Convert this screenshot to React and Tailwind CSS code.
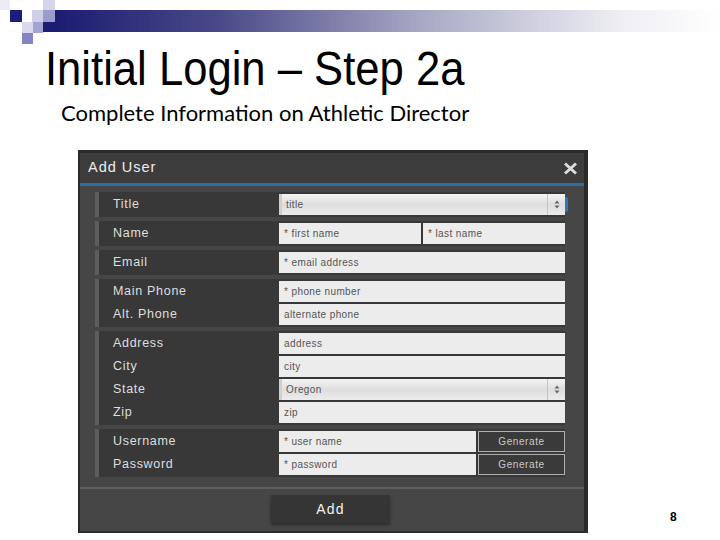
import React from "react";

function Input({ text, w = "w-[286px]" }) {
  return (
    <div className={`${w} h-[21px] bg-[#ececec] flex items-center pl-[5px] text-[10px] tracking-[0.4px] text-[#555] whitespace-nowrap`}>
      {text}
    </div>
  );
}

function Arrows() {
  return (
    <svg width="6" height="9" viewBox="0 0 6 9">
      <path d="M3 0.5 L5.5 3.5 H0.5 Z" fill="#666" />
      <path d="M3 8.5 L5.5 5.5 H0.5 Z" fill="#666" />
    </svg>
  );
}

function Select({ text, focus }) {
  return (
    <div className="relative w-[286px] h-[21px] flex bg-linear-to-b from-[#f4f4f4] via-[#dedede] to-[#ececec] border-l-[3px] border-[#d0d0d0]">
      <div className="flex-1 flex items-center pl-[4px] text-[10px] tracking-[0.4px] text-[#555]">{text}</div>
      <div className="w-[18px] border-l border-[#c4c4c4] flex items-center justify-center">
        <Arrows />
      </div>
      {focus && <div className="absolute right-[-3px] top-[3px] w-[3px] h-[15px] bg-[#2f78c0] rounded-r-[2px]" />}
    </div>
  );
}

function GenButton() {
  return (
    <div className="w-[87px] h-[21px] bg-[#3a3a3a] border border-[#b0b0b0] flex items-center justify-center text-[10px] tracking-[0.6px] text-[#c8c8c8]">
      Generate
    </div>
  );
}

function Group({ labels, children }) {
  return (
    <div className="flex w-[470px] bg-[#383838]">
      <div className="w-[4px] bg-[#5d5d5d]" />
      <div className="w-[180px] flex flex-col gap-[2px] py-[2px]">
        {labels.map((l) => (
          <div key={l} className="h-[21px] flex items-center pl-[14px] text-[12.5px] tracking-[0.7px] text-[#dedede]">
            {l}
          </div>
        ))}
      </div>
      <div className="w-[286px] flex flex-col gap-[2px] py-[2px]">{children}</div>
    </div>
  );
}

export default function App() {
  return (
    <div className="w-[720px] h-[540px] bg-white flex flex-col overflow-hidden font-['Liberation_Sans',Arial,sans-serif]">
      <svg width="720" height="44" viewBox="0 0 720 44" className="block shrink-0">
        <defs>
          <linearGradient id="bar" x1="0" y1="0" x2="1" y2="0">
            <stop offset="0" stopColor="#1c1c72" />
            <stop offset="0.25" stopColor="#4a4a88" />
            <stop offset="0.55" stopColor="#a8a8c4" />
            <stop offset="0.85" stopColor="#eeeef4" />
            <stop offset="1" stopColor="#ffffff" />
          </linearGradient>
        </defs>
        <rect x="55" y="10" width="665" height="22" fill="url(#bar)" />
        <rect x="43" y="22" width="13" height="10" fill="#1c1c72" />
        <rect x="0" y="0" width="10" height="10" fill="#ececf6" />
        <rect x="10" y="10" width="12" height="12" fill="#1c1c7a" />
        <rect x="32" y="10" width="11" height="12" fill="#cfcfe8" />
        <rect x="43" y="0" width="12" height="10" fill="#d4d4ea" />
        <rect x="43" y="10" width="12" height="12" fill="#9c9ccc" />
        <rect x="22" y="22" width="11" height="11" fill="#d8d8ee" />
        <rect x="33" y="22" width="10" height="11" fill="#a4a4d2" />
        <rect x="22" y="33" width="11" height="11" fill="#8484c2" />
      </svg>

      <div className="h-[49px] leading-[49px] text-[49px] text-black pl-[45px] whitespace-nowrap">
        <span className="inline-block origin-left scale-x-[0.89]">Initial Login – Step 2a</span>
      </div>

      <div className="mt-[7px] h-[26px] leading-[26px] text-[22px] text-black pl-[61px] font-['Lato',sans-serif] whitespace-nowrap">
        Complete Information on Athletic Director
      </div>

      <div className="mt-[24px] flex items-end">
        <div className="ml-[78px] w-[510px] h-[383px] flex flex-col border-t-[3px] border-l-2 border-r-4 border-b-2 border-[#2a2a2a]">
          <div className="h-[30px] bg-[#3c3c3c] flex items-center justify-between pl-[8px] pr-[6px]">
            <div className="text-[14.5px] tracking-[1px] text-[#ececec]">Add User</div>
            <svg width="15" height="13" viewBox="0 0 15 13">
              <path d="M2 1.5 L13 11.5 M13 1.5 L2 11.5" stroke="#dcdcdc" strokeWidth="3" strokeLinecap="butt" />
            </svg>
          </div>
          <div className="h-[3px] bg-[#2e6ea3]" />
          <div className="flex-1 bg-[#464646] flex flex-col">
            <div className="pt-[6px] pl-[15px] flex flex-col gap-[4px]">
              <Group labels={["Title"]}>
                <Select text="title" focus />
              </Group>
              <Group labels={["Name"]}>
                <div className="flex gap-[2px]">
                  <Input text="* first name" w="w-[142px]" />
                  <Input text="* last name" w="w-[142px]" />
                </div>
              </Group>
              <Group labels={["Email"]}>
                <Input text="* email address" />
              </Group>
              <Group labels={["Main Phone", "Alt. Phone"]}>
                <Input text="* phone number" />
                <Input text="alternate phone" />
              </Group>
              <Group labels={["Address", "City", "State", "Zip"]}>
                <Input text="address" />
                <Input text="city" />
                <Select text="Oregon" />
                <Input text="zip" />
              </Group>
              <Group labels={["Username", "Password"]}>
                <div className="flex gap-[2px]">
                  <Input text="* user name" w="w-[197px]" />
                  <GenButton />
                </div>
                <div className="flex gap-[2px]">
                  <Input text="* password" w="w-[197px]" />
                  <GenButton />
                </div>
              </Group>
            </div>
            <div className="mt-[10px] h-[2px] bg-[#5e5e5e]" />
            <div className="pt-[6px] pl-[191px]">
              <div className="w-[119px] h-[28px] bg-[#353535] shadow-[0_2px_3px_rgba(0,0,0,0.4)] flex items-center justify-center text-[14px] tracking-[1.2px] text-[#f2f2f2]">
                Add
              </div>
            </div>
          </div>
        </div>
        <div className="ml-[82px] mb-[10px] text-[12px] font-bold text-black leading-none">8</div>
      </div>
    </div>
  );
}
